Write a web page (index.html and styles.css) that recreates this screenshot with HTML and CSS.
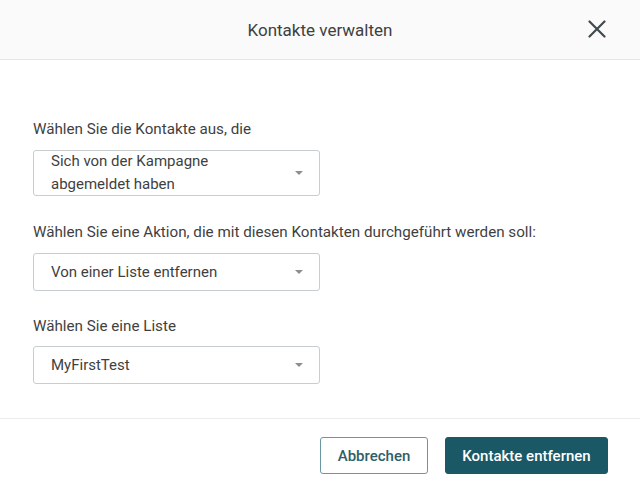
FILE: index.html
```html
<!DOCTYPE html>
<html lang="de">
<head>
<meta charset="utf-8">
<title>Kontakte verwalten</title>
<link rel="stylesheet" href="styles.css">
</head>
<body>
<div class="dialog">
  <header class="header">
    <h1 class="title">Kontakte verwalten</h1>
    <button class="close" aria-label="Schließen">
      <svg width="18" height="18" viewBox="0 0 18 18"><path d="M1.5 1.5 L16.5 16.5 M16.5 1.5 L1.5 16.5" stroke="#3f4a50" stroke-width="2.2" stroke-linecap="round" fill="none"/></svg>
    </button>
  </header>
  <main class="body">
    <div class="field first">
      <label class="label">Wählen Sie die Kontakte aus, die</label>
      <div class="select tall"><span class="value">Sich von der Kampagne<br>abgemeldet haben</span><span class="caret"></span></div>
    </div>
    <div class="field">
      <label class="label">Wählen Sie eine Aktion, die mit diesen Kontakten durchgeführt werden soll:</label>
      <div class="select"><span class="value">Von einer Liste entfernen</span><span class="caret"></span></div>
    </div>
    <div class="field last">
      <label class="label">Wählen Sie eine Liste</label>
      <div class="select"><span class="value">MyFirstTest</span><span class="caret"></span></div>
    </div>
  </main>
  <footer class="footer">
    <button class="btn secondary">Abbrechen</button>
    <button class="btn primary">Kontakte entfernen</button>
  </footer>
</div>
</body>
</html>
```
FILE: styles.css
```css
* { box-sizing: border-box; }
html, body { margin: 0; padding: 0; background: #ffffff; }
body { font-family: Roboto, "Liberation Sans", sans-serif; color: #3d3d3d; }
.dialog { width: 640px; height: 492px; display: flex; flex-direction: column; }
.header {
  height: 60px;
  background: #fafafa;
  border-bottom: 1px solid #e6e6e6;
  display: flex;
  align-items: center;
  justify-content: center;
  position: relative;
}
.title { margin: 0; font-size: 17px; font-weight: 400; color: #404040; line-height: 20px; }
.close {
  position: absolute;
  right: 34px;
  top: 20px;
  width: 18px; height: 18px;
  padding: 0; border: 0; background: none;
  display: flex;
}
.body { height: 359px; padding: 59px 33px 0 33px; border-bottom: 1px solid #ececec; }
.field { display: flex; flex-direction: column; margin-top: 26px; }
.field.first { margin-top: 0; }
.field.last { margin-top: 25px; }
.field.last .label { margin-bottom: 10px; }
.label { font-size: 15.2px; line-height: 20px; color: #3f3f3f; margin-bottom: 11px; }
.select {
  width: 287px;
  height: 38px;
  border: 1px solid #c8cdd0;
  border-radius: 3px;
  display: flex;
  align-items: center;
  justify-content: space-between;
  padding: 0 17px 0 17px;
  font-size: 15px;
  color: #3f3f3f;
}
.select.tall { height: 46px; }
.value { line-height: 23px; }
.caret {
  width: 0; height: 0;
  border-left: 4px solid transparent;
  border-right: 4px solid transparent;
  border-top: 4px solid #8a8f93;
  margin-right: -1px;
}
.footer {
  flex: 1;
  display: flex;
  justify-content: flex-end;
  align-items: flex-start;
  padding: 18px 32px 0 0;
  gap: 17px;
}
.btn {
  height: 37px;
  border-radius: 3px;
  font-family: Roboto, "Liberation Sans", sans-serif;
  font-size: 15px;
  font-weight: 500;
  padding: 0;
  cursor: pointer;
}
.secondary { width: 108px; background: #fff; border: 1px solid #6a98a2; color: #2f5e69; }
.primary { width: 163px; background: #1a5866; border: 1px solid #1a5866; color: #fff; }
```
